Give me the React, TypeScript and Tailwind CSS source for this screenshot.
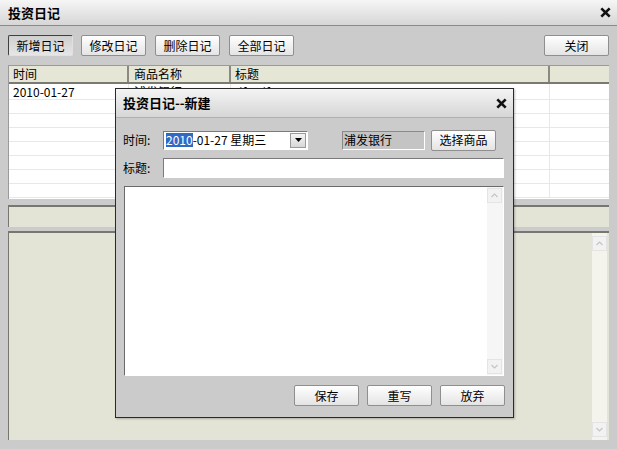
import React from "react";

const font = { fontFamily: '"Noto Sans CJK SC", "Liberation Sans", sans-serif' };

function Btn({ label, pressed, className = "" }: { label: string; pressed?: boolean; className?: string }) {
  return (
    <div
      className={
        "flex h-[21px] w-[65px] items-center justify-center rounded-[2px] border text-[12px] text-black " +
        (pressed
          ? "border-t-[#404040] border-l-[#404040] border-r-[#e0e0e0] border-b-[#e0e0e0] bg-gradient-to-b from-[#cfcfcf] to-[#e6e6e6] "
          : "border-[#8f8f8f] bg-gradient-to-b from-white to-[#e4e4e4] ") +
        className
      }
    >
      {label}
    </div>
  );
}

function ScrollArrow({ up }: { up?: boolean }) {
  return (
    <div className="flex h-[15px] w-[15px] items-center justify-center border border-[#e4e4e4] bg-[#f2f2f2]">
      <svg width="7" height="5" viewBox="0 0 7 5">
        <path d={up ? "M0.5 4 L3.5 1 L6.5 4" : "M0.5 1 L3.5 4 L6.5 1"} fill="none" stroke="#c4c4c4" strokeWidth="1.2" />
      </svg>
    </div>
  );
}

function CloseX({ size = 11 }: { size?: number }) {
  return (
    <svg width={size} height={size} viewBox="0 0 10 10">
      <path d="M1.2 1.2 L8.8 8.8 M8.8 1.2 L1.2 8.8" stroke="#111" strokeWidth="2.4" />
    </svg>
  );
}

const rows = Array.from({ length: 8 });

export default function App() {
  return (
    <div className="relative flex h-[449px] w-[617px] flex-col overflow-hidden bg-[#cbcbcb]" style={font}>
      {/* title bar */}
      <div className="flex h-[26px] shrink-0 items-center justify-between border-b border-[#8a8a8a] bg-gradient-to-b from-[#f6f6f6] to-[#d6d6d6] pl-[8px] pr-[6px]">
        <span className="text-[13px] font-bold text-black">投资日记</span>
        <CloseX />
      </div>

      {/* toolbar */}
      <div className="mt-[9px] flex h-[21px] shrink-0 px-[8px]">
        <Btn label="新增日记" pressed />
        <Btn label="修改日记" className="ml-[8px]" />
        <Btn label="删除日记" className="ml-[9px]" />
        <Btn label="全部日记" className="ml-[9px]" />
        <Btn label="关闭" className="ml-auto" />
      </div>

      {/* grid */}
      <div className="mx-[8px] mt-[9px] flex h-[134px] shrink-0 flex-col overflow-hidden border-l border-t border-[#9a9a9a] bg-white">
        <div className="flex h-[18px] shrink-0 border-b-2 border-[#7a7a72] bg-[#e6e6d6] text-[12px] leading-[16px] text-black">
          <div className="w-[120px] border-r-2 border-[#8a8a82] pl-[4px]">时间</div>
          <div className="w-[102px] border-r-2 border-[#8a8a82] pl-[5px]">商品名称</div>
          <div className="w-[319px] border-r-2 border-[#8a8a82] pl-[4px]">标题</div>
          <div className="flex-1" />
        </div>
        {rows.map((_, i) => (
          <div
            key={i}
            className={
              "flex shrink-0 border-b border-[#e8e8e8] text-[12px] leading-[15px] text-black " +
              (i === 0 ? "h-[16px]" : "h-[14px]")
            }
          >
            <div className="w-[120px] border-r border-[#e8e8e8] pl-[4px]">{i === 0 ? "2010-01-27" : ""}</div>
            <div className="w-[102px] border-r border-[#e8e8e8] pl-[5px]">{i === 0 ? "浦发银行" : ""}</div>
            <div className="w-[319px] border-r border-[#e8e8e8] pl-[4px]">{i === 0 ? "dfasdf" : ""}</div>
            <div className="flex-1" />
          </div>
        ))}
      </div>

      {/* info strip */}
      <div className="mx-[8px] mt-[6px] h-[22px] shrink-0 border-t-2 border-l border-[#77776f] bg-[#e4e4d6]" />

      {/* bottom panel */}
      <div className="mx-[8px] mt-[4px] flex h-[209px] shrink-0 border-t-2 border-l border-[#77776f] bg-[#e4e4d6]">
        <div className="flex-1" />
        <div className="mr-[2px] flex w-[15px] flex-col justify-between bg-[#f4f4ec] py-[3px]">
          <ScrollArrow up />
          <ScrollArrow />
        </div>
      </div>

      {/* dialog */}
      <div className="absolute left-[115px] top-[88px] flex h-[330px] w-[399px] flex-col border border-[#2a2a2a] bg-[#cbcbcb] shadow-[1px_1px_2px_rgba(0,0,0,0.25)]">
        <div className="flex h-[29px] shrink-0 items-center justify-between border-b border-[#b0b0b0] bg-gradient-to-b from-[#f4f4f4] to-[#d6d6d6] pl-[7px] pr-[6px]">
          <span className="text-[13px] font-bold text-black">投资日记--新建</span>
          <CloseX />
        </div>

        <div className="mt-[12px] flex h-[20px] items-center pl-[7px] text-[12px] text-black">
          <span className="w-[40px]">时间:</span>
          <div className="flex h-[19px] w-[145px] items-center border border-[#7a7a7a] border-b-white border-r-white bg-white pl-[2px]">
            <span className="bg-[#316ac5] leading-[14px] text-white">2010</span>
            <span className="flex-1 leading-[14px]">-01-27 星期三</span>
            <div className="mr-[1px] flex h-[15px] w-[16px] items-center justify-center border border-[#9a9a9a] bg-gradient-to-b from-[#f4f4f4] to-[#d8d8d8]">
              <svg width="7" height="4" viewBox="0 0 7 4">
                <path d="M0 0 H7 L3.5 4 Z" fill="#000" />
              </svg>
            </div>
          </div>
          <div className="ml-[34px] flex h-[19px] w-[83px] items-center border border-[#8a8a8a] border-b-white border-r-white bg-[#c4c4c4] pl-[1px]">
            浦发银行
          </div>
          <Btn label="选择商品" className="ml-[6px]" />
        </div>

        <div className="mt-[8px] flex h-[20px] items-center pl-[7px] text-[12px] text-black">
          <span className="w-[40px]">标题:</span>
          <div className="h-[20px] w-[341px] border border-[#7a7a7a] border-b-white border-r-white bg-white" />
        </div>

        <div className="ml-[8px] mt-[8px] flex h-[190px] w-[380px] border border-[#6a6a6a] border-b-white border-r-white bg-white">
          <div className="flex-1" />
          <div className="flex w-[16px] flex-col justify-between bg-[#f6f6f6] py-[1px]">
            <ScrollArrow up />
            <ScrollArrow />
          </div>
        </div>

        <div className="mt-[9px] flex justify-end gap-[8px] pr-[8px]">
          <Btn label="保存" />
          <Btn label="重写" />
          <Btn label="放弃" />
        </div>
      </div>
    </div>
  );
}
